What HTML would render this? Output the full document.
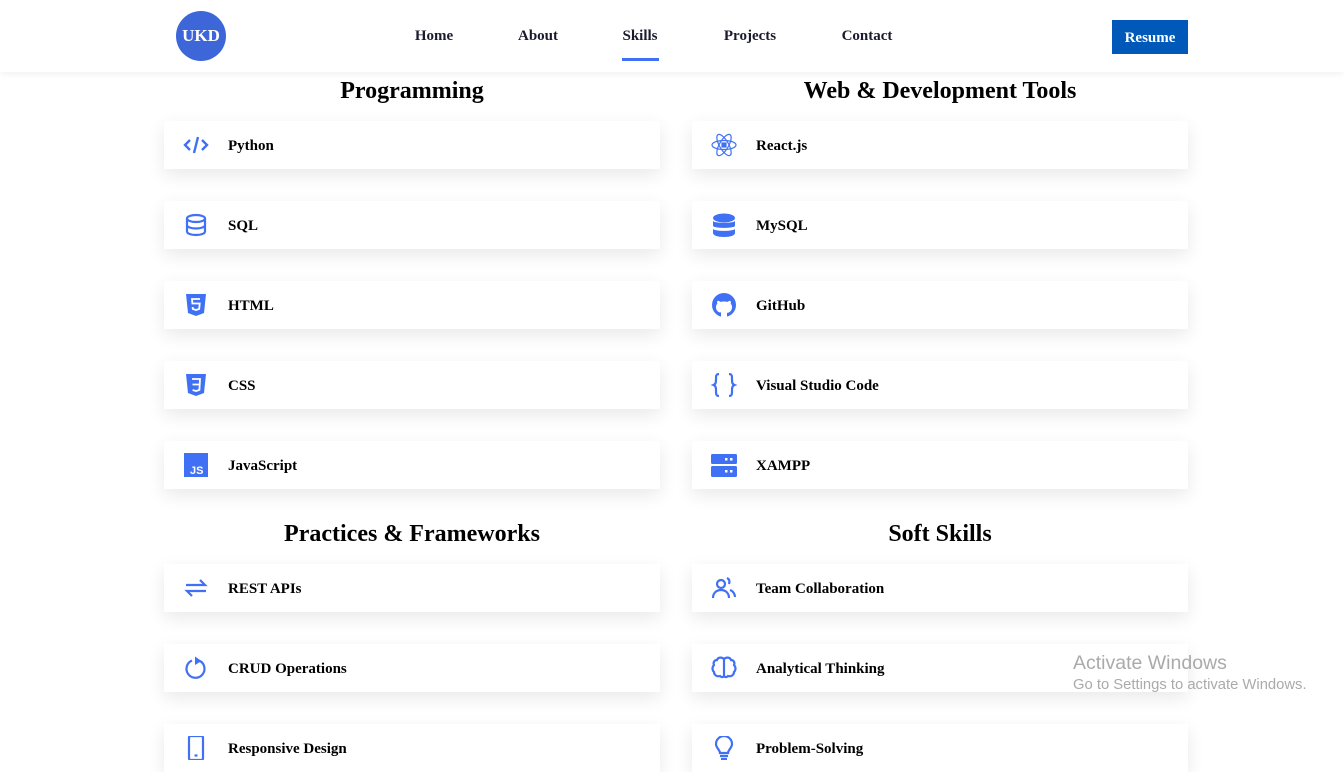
<!DOCTYPE html>
<html><head><meta charset="utf-8"><style>
*{margin:0;padding:0;box-sizing:border-box}
body{width:1344px;height:768px;overflow:hidden;background:#fff;font-family:"Liberation Serif",serif;position:relative}
.hdr{position:absolute;left:0;top:0;width:1344px;height:72px;background:#fff;box-shadow:0 2px 6px rgba(0,0,0,.06);z-index:2}
.logo{position:absolute;left:176px;top:11px;width:50px;height:50px;border-radius:50%;background:#3d66d9;color:#fff;font-weight:bold;font-size:17px;line-height:50px;text-align:center}
.nav{position:absolute;top:28px;font-size:15px;font-weight:bold;color:#1a1a2e;transform:translateX(-50%)}
.ul{position:absolute;left:622px;top:58px;width:37px;height:3px;background:#4070f4}
.btn{position:absolute;left:1112px;top:20px;width:76px;height:34px;background:#0058b8;color:#fff;font-weight:bold;font-size:15px;line-height:36px;text-align:center}
h2{position:absolute;font-size:24px;font-weight:bold;color:#000;text-align:center;width:496px}
.card{position:absolute;width:496px;height:48px;background:#fff;box-shadow:0 6px 18px rgba(0,0,0,.09)}
.card span{position:absolute;left:64px;top:17px;font-size:15px;font-weight:bold;color:#000}
.card svg{position:absolute;left:18px;top:12px;width:28px;height:24px}
.wm1{position:absolute;left:1073px;top:652px;font-family:"Liberation Sans",sans-serif;font-size:19.5px;color:#aaa}
.wm2{position:absolute;left:1073px;top:677px;font-family:"Liberation Sans",sans-serif;font-size:14.8px;color:#aaa}
</style></head><body>
<div class="hdr">
<div class="logo">UKD</div>
<div class="nav" style="left:434px">Home</div>
<div class="nav" style="left:538px">About</div>
<div class="nav" style="left:640px">Skills</div>
<div class="nav" style="left:750px">Projects</div>
<div class="nav" style="left:867px">Contact</div>
<div class="ul"></div>
<div class="btn">Resume</div>
</div>

<h2 style="left:164px;top:78px">Programming</h2>
<h2 style="left:692px;top:78px">Web &amp; Development Tools</h2>
<h2 style="left:164px;top:521px">Practices &amp; Frameworks</h2>
<h2 style="left:692px;top:521px">Soft Skills</h2>

<div class="card" style="left:164px;top:121px"><svg viewBox="0 0 28 24" fill="none" stroke="#4070f4" stroke-width="2.4"><path d="M8 7 L3 12 L8 17 M20 7 L25 12 L20 17 M16 4 L12 20"/></svg><span>Python</span></div>
<div class="card" style="left:164px;top:201px"><svg viewBox="0 0 28 24" fill="none" stroke="#4070f4" stroke-width="2.2"><ellipse cx="14" cy="5.5" rx="9" ry="3.5"/><path d="M5 5.5v13c0 2 4 3.5 9 3.5s9-1.5 9-3.5v-13M5 12c0 2 4 3.5 9 3.5s9-1.5 9-3.5"/></svg><span>SQL</span></div>
<div class="card" style="left:164px;top:281px"><svg viewBox="0 0 28 24"><path d="M4 1h20l-2 19-8 3-8-3z" fill="#4070f4"/><path d="M18 6h-8l.4 4.5h7.3l-.5 5.5-3.2 1-3.2-1-.2-2" fill="none" stroke="#fff" stroke-width="1.8"/></svg><span>HTML</span></div>
<div class="card" style="left:164px;top:361px"><svg viewBox="0 0 28 24"><path d="M4 1h20l-2 19-8 3-8-3z" fill="#4070f4"/><path d="M10 6h8l-.6 11-3.4 1-3.4-1M10.5 11.5h6.5" fill="none" stroke="#fff" stroke-width="1.8"/></svg><span>CSS</span></div>
<div class="card" style="left:164px;top:441px"><svg viewBox="0 0 28 24"><rect x="2" y="0" width="24" height="24" fill="#4070f4"/><text x="8" y="21" font-family="Liberation Sans,sans-serif" font-size="11" font-weight="bold" fill="#fff">JS</text></svg><span>JavaScript</span></div>
<div class="card" style="left:164px;top:564px"><svg viewBox="0 0 28 24" fill="none" stroke="#4070f4" stroke-width="2.2"><path d="M4 9h19l-5-5M24 15H5l5 5"/></svg><span>REST APIs</span></div>
<div class="card" style="left:164px;top:644px"><svg viewBox="0 0 28 24" fill="none" stroke="#4070f4" stroke-width="2.2"><path d="M18 5A9 9 0 1 1 10 4.5"/><path d="M13 0.5l6.5 4.5-6.5 4z" fill="#4070f4" stroke="none"/></svg><span>CRUD Operations</span></div>
<div class="card" style="left:164px;top:724px"><svg viewBox="0 0 28 24" fill="none" stroke="#4070f4" stroke-width="2.2"><rect x="7" y="0" width="14" height="24" rx="1.5"/><path d="M12.5 19.5h3"/></svg><span>Responsive Design</span></div>

<div class="card" style="left:692px;top:121px"><svg viewBox="0 0 28 24" fill="none" stroke="#4070f4" stroke-width="1.2"><ellipse cx="14" cy="12" rx="12" ry="4.5"/><ellipse cx="14" cy="12" rx="12" ry="4.5" transform="rotate(60 14 12)"/><ellipse cx="14" cy="12" rx="12" ry="4.5" transform="rotate(-60 14 12)"/><rect x="12" y="10" width="4" height="4" fill="#4070f4"/></svg><span>React.js</span></div>
<div class="card" style="left:692px;top:201px"><svg viewBox="0 0 28 24" fill="#4070f4"><ellipse cx="14" cy="5" rx="11" ry="4.5"/><path d="M3 8c2 2.5 20 2.5 22 0v5c-2 2.5-20 2.5-22 0zM3 16c2 2.5 20 2.5 22 0v4c0 2.5-5 4-11 4s-11-1.5-11-4z"/></svg><span>MySQL</span></div>
<div class="card" style="left:692px;top:281px"><svg viewBox="0 0 28 24"><circle cx="14" cy="12" r="12" fill="#4070f4"/><path d="M11 24v-4c-3-.5-5-2.5-5-6 0-1.5.5-2.5 1.3-3.3-.2-.8-.2-2 .2-3 1.3 0 2.3.7 3 1.2 2-.5 5-.5 7 0 .7-.5 1.7-1.2 3-1.2.4 1 .4 2.2.2 3 .8.8 1.3 1.8 1.3 3.3 0 3.5-2 5.5-5 6v4z" fill="#fff"/><path d="M11 20c-2 .5-3.5 0-4.5-2" stroke="#4070f4" stroke-width="1.5" fill="none"/></svg><span>GitHub</span></div>
<div class="card" style="left:692px;top:361px"><svg viewBox="0 0 28 24" fill="none" stroke="#4070f4" stroke-width="2.2"><path d="M9 1c-3 0-3 2-3 5s0 5-2.5 6c2.5 1 2.5 3 2.5 6s0 5 3 5M19 1c3 0 3 2 3 5s0 5 2.5 6c-2.5 1-2.5 3-2.5 6s0 5-3 5"/></svg><span>Visual Studio Code</span></div>
<div class="card" style="left:692px;top:441px"><svg viewBox="0 0 28 24"><rect x="1" y="1" width="26" height="10" rx="1.5" fill="#4070f4"/><rect x="1" y="13" width="26" height="11" rx="1.5" fill="#4070f4"/><rect x="15" y="5" width="2.5" height="2.5" fill="#fff"/><rect x="20" y="5" width="2.5" height="2.5" fill="#fff"/><rect x="15" y="17" width="2.5" height="2.5" fill="#fff"/><rect x="20" y="17" width="2.5" height="2.5" fill="#fff"/></svg><span>XAMPP</span></div>
<div class="card" style="left:692px;top:564px"><svg viewBox="0 0 28 24" fill="none" stroke="#4070f4" stroke-width="2.2"><circle cx="11" cy="8" r="4"/><path d="M3 22c0-5 3.5-8 8-8s8 3 8 8M17 2c2 1 3 3 2 6M20 14c3 1 5 4 5 7"/></svg><span>Team Collaboration</span></div>
<div class="card" style="left:692px;top:644px"><svg viewBox="0 0 28 24" fill="none" stroke="#4070f4" stroke-width="2.2"><path d="M14 3c-2-2-6-2-7 1-3 0-4 3-3 5-2 2-2 5 0 7 0 3 3 5 6 4 2 2 4 1 4-1zM14 3c2-2 6-2 7 1 3 0 4 3 3 5 2 2 2 5 0 7 0 3-3 5-6 4-2 2-4 1-4-1zM14 3v18"/></svg><span>Analytical Thinking</span></div>
<div class="card" style="left:692px;top:724px"><svg viewBox="0 0 28 24" fill="none" stroke="#4070f4" stroke-width="2.2"><path d="M10 17c0-3-4-5-4-9a8 8 0 0 1 16 0c0 4-4 6-4 9zM10 20h8M11 23h6"/></svg><span>Problem-Solving</span></div>

<div class="wm1">Activate Windows</div>
<div class="wm2">Go to Settings to activate Windows.</div>
</body></html>
